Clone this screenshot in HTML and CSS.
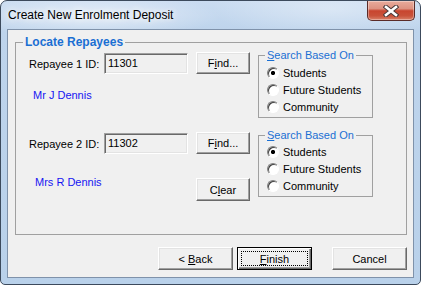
FILE: index.html
```html
<!DOCTYPE html>
<html>
<head>
<meta charset="utf-8">
<link rel="stylesheet" href="styles.css">
</head>
<body>
<div class="window">
  <div class="titlebar">
    <span class="title">Create New Enrolment Deposit</span>
    <div class="close">
      <svg width="16" height="12" viewBox="0 0 16 12">
        <path d="M3 2 L13 10 M13 2 L3 10" stroke="#4a3a3a" stroke-width="4.6" stroke-linecap="square" fill="none"/>
        <path d="M3 2 L13 10 M13 2 L3 10" stroke="#ffffff" stroke-width="2.6" stroke-linecap="square" fill="none"/>
      </svg>
    </div>
  </div>
  <div class="client">
    <fieldset class="group">
      <legend>Locate Repayees</legend>
      <div class="block block1">
        <div class="left">
          <div class="idrow"><label>Repayee 1 ID:</label><div class="textbox">11301</div></div>
          <div class="name name1">Mr J Dennis</div>
        </div>
        <div class="btncol">
          <button class="btn small">F<u>i</u>nd...</button>
        </div>
        <fieldset class="search">
          <legend><u>S</u>earch Based On</legend>
          <div class="radio-row"><span class="radio checked"></span>Students</div>
          <div class="radio-row"><span class="radio"></span>Future Students</div>
          <div class="radio-row"><span class="radio"></span>Community</div>
        </fieldset>
      </div>
      <div class="block block2">
        <div class="left">
          <div class="idrow"><label>Repayee 2 ID:</label><div class="textbox">11302</div></div>
          <div class="name name2">Mrs R Dennis</div>
        </div>
        <div class="btncol">
          <button class="btn small">F<u>i</u>nd...</button>
          <button class="btn small tall">C<u>l</u>ear</button>
        </div>
        <fieldset class="search search2">
          <legend><u>S</u>earch Based On</legend>
          <div class="radio-row"><span class="radio checked"></span>Students</div>
          <div class="radio-row"><span class="radio"></span>Future Students</div>
          <div class="radio-row"><span class="radio"></span>Community</div>
        </fieldset>
      </div>
    </fieldset>
    <div class="actions">
      <button class="btn wide">&lt; <u>B</u>ack</button>
      <button class="btn wide default"><u>F</u>inish</button>
      <button class="btn wide cancel">Cancel</button>
    </div>
  </div>
</div>
</body>
</html>
```
FILE: styles.css
```css
* { box-sizing: border-box; }
html, body { margin: 0; padding: 0; }
body {
  width: 421px;
  height: 285px;
  overflow: hidden;
  background: #ffffff;
  font-family: "Liberation Sans", Arial, sans-serif;
  font-size: 11px;
  color: #000;
}
.window {
  width: 421px;
  height: 285px;
  border: 1px solid #3c4a5c;
  border-radius: 7px 7px 5px 5px;
  background:
    radial-gradient(ellipse 130px 22px at 90px 15px, rgba(255,255,255,0.55), rgba(255,255,255,0) 100%),
    radial-gradient(ellipse 120px 30px at 330px 8px, rgba(255,255,255,0.35), rgba(255,255,255,0) 100%),
    linear-gradient(180deg, #cadcf1 0px, #bed4ec 28px, #b9d1ea 100%);
  display: flex;
  flex-direction: column;
  overflow: hidden;
}
.titlebar {
  height: 28px;
  display: flex;
  align-items: flex-start;
}
.title {
  font-size: 12px;
  line-height: 28px;
  padding-left: 7px;
  color: #000;
  text-shadow: 0 0 6px #ffffff, 0 0 10px rgba(255,255,255,0.8);
}
.close {
  margin-left: auto;
  margin-right: 5px;
  width: 48px;
  height: 20px;
  border: 1px solid #5a2b28;
  border-top: none;
  border-radius: 0 0 5px 5px;
  background: linear-gradient(180deg, #e9ab9c 0%, #de9281 40%, #c8452f 52%, #c9523a 78%, #d9826a 100%);
  box-shadow: inset 0 0 0 1px rgba(255,255,255,0.35);
  display: flex;
  align-items: center;
  justify-content: center;
}
.client {
  margin: 0 6px;
  height: 249px;
  border: 1px solid #7f92aa;
  background: #f0f0f0;
  padding: 5px 6px 7px 7px;
  display: flex;
  flex-direction: column;
}
.group {
  margin: 0;
  height: 200px;
  border: 1px solid #a0a0a0;
  padding: 0 0 0 13px;
  min-width: 0;
}
.group > legend {
  margin-left: -6px;
  padding: 0 2px;
  font-weight: bold;
  font-size: 12px;
  line-height: 14px;
  color: #1a6fd3;
}
.block {
  display: flex;
  align-items: flex-start;
}
.block1 { height: 80px; }
.left { width: 159px; }
.idrow {
  display: flex;
  align-items: center;
  margin-top: 4px;
}
.idrow label { width: 75px; }
.textbox {
  width: 84px;
  height: 21px;
  border: 1px solid;
  border-color: #a0a0a0 #ffffff #ffffff #a0a0a0;
  box-shadow: inset 1px 1px #696969, inset -1px -1px #e3e3e3;
  padding-left: 3px;
  line-height: 19px;
  background: #f0f0f0;
}
.name { color: #1616f2; line-height: 13px; }
.name1 { margin: 15px 0 0 4px; }
.name2 { margin: 22px 0 0 6px; }
.btncol {
  margin: 3px 0 0 8px;
  display: flex;
  flex-direction: column;
  gap: 24px;
}
.btn {
  font-family: "Liberation Sans", Arial, sans-serif;
  font-size: 11px;
  color: #000;
  background: #f0f0f0;
  border: 1px solid;
  border-color: #ffffff #696969 #696969 #ffffff;
  box-shadow: inset -1px -1px #a0a0a0, inset 1px 1px #e3e3e3;
  padding: 0;
  margin: 0;
  border-radius: 0;
}
.btn.small { width: 54px; height: 22px; }
.btn.small.tall { height: 23px; }
.search {
  margin: 0 0 0 8px;
  width: 115px;
  height: 69px;
  border: 1px solid #a0a0a0;
  padding: 2px 0 0 8px;
  min-width: 0;
}
.search2 {
  height: 68px;
  padding-top: 1px;
}
.search legend {
  margin-left: -2px;
  padding: 0 2px;
  font-size: 11px;
  line-height: 13px;
  color: #1a6fd3;
}
.radio-row {
  display: flex;
  align-items: center;
  height: 17px;
  gap: 4px;
  white-space: nowrap;
}
.radio {
  width: 12px;
  height: 12px;
  flex: none;
  border-radius: 50%;
  border: 1px solid;
  border-color: #808080 #ffffff #ffffff #808080;
  box-shadow: inset 1px 1px #404040;
  background: #ffffff;
}
.radio.checked {
  background: radial-gradient(circle at 50% 50%, #000 0, #000 1.8px, #ffffff 2.4px);
}
.actions {
  display: flex;
  justify-content: flex-end;
  margin-top: 12px;
  height: 23px;
}
.btn.wide { width: 75px; height: 23px; }
.btn.default {
  margin-left: 4px;
  border-color: #000;
  box-shadow: inset 1px 1px #ffffff, inset -1px -1px #696969, inset -2px -2px #a0a0a0;
  outline: 1px dotted #000;
  outline-offset: -5px;
}
.btn.cancel { margin-left: 20px; }
```
